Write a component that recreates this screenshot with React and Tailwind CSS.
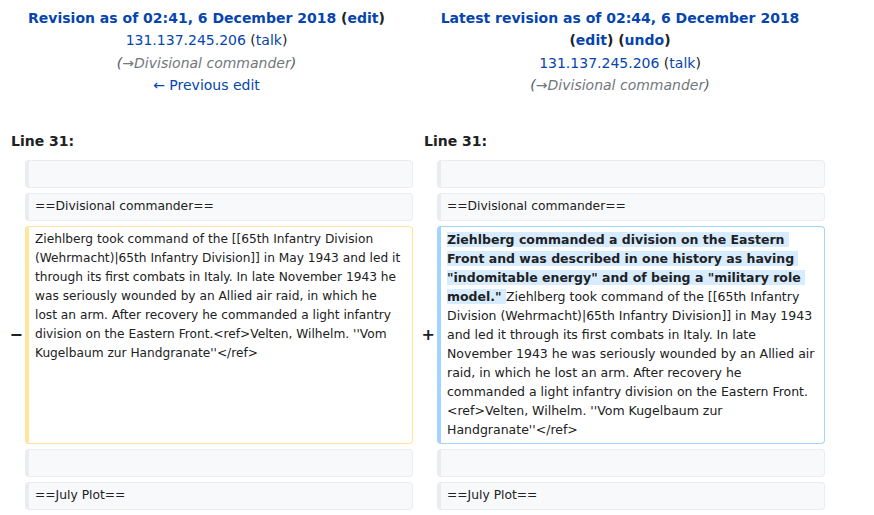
import React from 'react'

const font = { fontFamily: '"DejaVu Sans", Verdana, sans-serif' }

function Link({ children }) {
  return <a className="text-[#0645ad] no-underline cursor-pointer">{children}</a>
}

function Summary() {
  return (
    <div className="italic text-[#54595d]">
      (<span className="text-[#72777d]">→Divisional commander</span>)
    </div>
  )
}

function Context({ children }) {
  return (
    <div className="rounded-[4px] border border-l-4 border-[#eaecf0] bg-[#f8f9fa] px-[6px] py-[3.5px] text-[12.3px] leading-[19px] text-[#202122] whitespace-pre-wrap break-words">
      {children || <br />}
    </div>
  )
}

function Marker({ children }) {
  return (
    <div className="flex items-center justify-end text-[16px] font-bold text-[#202122]">
      {children}
    </div>
  )
}

function ContextRow({ text }) {
  return (
    <>
      <div />
      <Context>{text}</Context>
      <div />
      <Context>{text}</Context>
    </>
  )
}

export default function App() {
  return (
    <div className="min-h-[515px] bg-white pt-[7px] text-[#202122]" style={font}>
      <div className="grid grid-cols-[23px_388px_20px_388px] gap-x-[2px]">
        {/* header */}
        <div className="col-span-2 text-center text-[14px] leading-[22.4px]">
          <div className="font-bold">
            <Link>Revision as of 02:41, 6 December 2018</Link> (<Link>edit</Link>)
          </div>
          <div>
            <Link>131.137.245.206</Link> (<Link>talk</Link>)
          </div>
          <Summary />
          <div>
            <Link>← Previous edit</Link>
          </div>
        </div>
        <div className="col-span-2 text-center text-[14px] leading-[22.4px]">
          <div className="font-bold">
            <Link>Latest revision as of 02:44, 6 December 2018</Link>
          </div>
          <div className="font-bold">
            (<Link>edit</Link>) (<Link>undo</Link>)
          </div>
          <div>
            <Link>131.137.245.206</Link> (<Link>talk</Link>)
          </div>
          <Summary />
        </div>

        {/* line numbers */}
        <div className="col-span-2 mt-[33px] mb-[8px] pl-[11px] text-[14px] font-bold leading-[22px]">
          Line 31:
        </div>
        <div className="col-span-2 mt-[33px] mb-[8px] pl-[9px] text-[14px] font-bold leading-[22px]">
          Line 31:
        </div>
      </div>

      <div className="grid grid-cols-[23px_388px_20px_388px] gap-x-[2px] gap-y-[5px]">
        <ContextRow text="" />
        <ContextRow text="==Divisional commander==" />

        <Marker>−</Marker>
        <div className="rounded-[4px] border border-l-4 border-[#ffe49c] bg-white pl-[6px] pr-[10px] py-[3.5px] text-[12.2px] leading-[19px] whitespace-pre-wrap break-words">
          Ziehlberg took command of the [[65th Infantry Division (Wehrmacht)|65th Infantry Division]] in May 1943 and led it through its first combats in Italy. In late November 1943 he was seriously wounded by an Allied air raid, in which he lost an arm. After recovery he commanded a light infantry division on the Eastern Front.&lt;ref&gt;Velten, Wilhelm. ''Vom Kugelbaum zur Handgranate''&lt;/ref&gt;
        </div>
        <Marker>+</Marker>
        <div className="rounded-[4px] border border-l-4 border-[#a3d3ff] bg-white px-[6px] py-[3.5px] text-[12.5px] leading-[19px] whitespace-pre-wrap break-words">
          <span className="bg-[#d8ecff] font-bold">
            Ziehlberg commanded a division on the Eastern Front and was described in one history as having "indomitable energy" and of being a "military role model."{' '}
          </span>
          Ziehlberg took command of the [[65th Infantry Division (Wehrmacht)|65th Infantry Division]] in May 1943 and led it through its first combats in Italy. In late November 1943 he was seriously wounded by an Allied air raid, in which he lost an arm. After recovery he commanded a light infantry division on the Eastern Front.&lt;ref&gt;Velten, Wilhelm. ''Vom Kugelbaum zur Handgranate''&lt;/ref&gt;
        </div>

        <ContextRow text="" />
        <ContextRow text="==July Plot==" />
      </div>
    </div>
  )
}
